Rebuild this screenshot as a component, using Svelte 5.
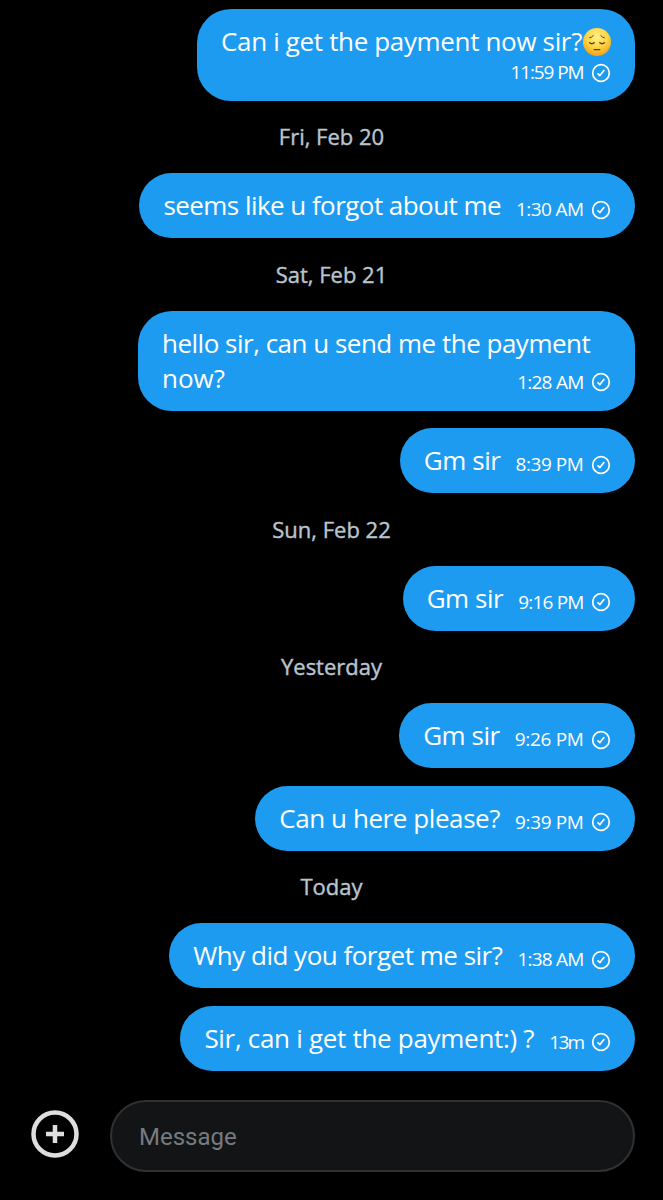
<script lang="ts">
  type Message = {
    text: string;
    // last line, shares its row with the time
    lastLine?: string;
    time: string;
    emoji?: boolean;
    layout?: 'below' | 'wrap';
    // letter spacing, px
    tracking: number;
    timeTracking: number;
  };

  type Day = {
    label?: string;
    messages: Message[];
  };

  const days: Day[] = [
    {
      messages: [
        {
          text: 'Can i get the payment now sir?',
          time: '11:59 PM',
          emoji: true,
          layout: 'below',
          tracking: -0.35,
          timeTracking: -1.1,
        },
      ],
    },
    {
      label: 'Fri, Feb 20',
      messages: [
        {
          text: 'seems like u forgot about me',
          time: '1:30 AM',
          tracking: -0.55,
          timeTracking: -0.6,
        },
      ],
    },
    {
      label: 'Sat, Feb 21',
      messages: [
        {
          text: 'hello sir, can u send me the payment',
          lastLine: 'now?',
          time: '1:28 AM',
          layout: 'wrap',
          tracking: -0.5,
          timeTracking: -0.75,
        },
        {
          text: 'Gm sir',
          time: '8:39 PM',
          tracking: -0.45,
          timeTracking: -0.43,
        },
      ],
    },
    {
      label: 'Sun, Feb 22',
      messages: [
        {
          text: 'Gm sir',
          time: '9:16 PM',
          tracking: -0.45,
          timeTracking: -0.83,
        },
      ],
    },
    {
      label: 'Yesterday',
      messages: [
        {
          text: 'Gm sir',
          time: '9:26 PM',
          tracking: -0.45,
          timeTracking: -0.33,
        },
        {
          text: 'Can u here please?',
          time: '9:39 PM',
          tracking: -0.42,
          timeTracking: -0.38,
        },
      ],
    },
    {
      label: 'Today',
      messages: [
        {
          text: 'Why did you forget me sir?',
          time: '1:38 AM',
          tracking: -0.5,
          timeTracking: -0.8,
        },
        {
          text: 'Sir, can i get the payment:) ?',
          time: '13m',
          tracking: -0.3,
          timeTracking: -1.7,
        },
      ],
    },
  ];
</script>

<div class="chat">
  <div class="messages">
    {#each days as day}
      {#if day.label}
        <div class="day-label">{day.label}</div>
      {/if}
      {#each day.messages as message}
        <div class="bubble {message.layout ?? ''}">
          <div class="text" style:letter-spacing="{message.tracking}px">
            {message.text}{#if message.emoji}<svg
                class="emoji"
                viewBox="0 0 28 28"
                aria-label="pensive face"
              >
                <defs>
                  <radialGradient id="face" cx="50%" cy="32%" r="68%">
                    <stop offset="0" stop-color="#fff08a" />
                    <stop offset="0.55" stop-color="#fdd544" />
                    <stop offset="1" stop-color="#f5a012" />
                  </radialGradient>
                </defs>
                <circle cx="14" cy="14" r="14" fill="url(#face)" />
                <g fill="none" stroke="#5a3a10" stroke-linecap="round">
                  <path d="M6.6 9.8Q9 9.4 10.3 7.6" stroke-width="1" />
                  <path d="M21.4 9.8Q19 9.4 17.7 7.6" stroke-width="1" />
                  <path d="M6.6 14.8Q8.9 16.7 11.2 14.8" stroke-width="1.4" />
                  <path d="M16.8 14.8Q19.1 16.7 21.4 14.8" stroke-width="1.4" />
                  <path d="M11.2 21.6H16.8" stroke-width="1.3" />
                </g>
              </svg>{/if}
          </div>
          {#if message.lastLine}
            <div class="text">{message.lastLine}</div>
          {/if}
          <div class="meta">
            <span style:letter-spacing="{message.timeTracking}px"
              >{message.time}</span
            >
            <svg class="sent" viewBox="0 0 20 20" aria-hidden="true">
              <circle cx="10" cy="10" r="8.3" />
              <path d="M6.5 10.3L8.9 12.6L13.3 7" />
            </svg>
          </div>
        </div>
      {/each}
    {/each}
  </div>

  <div class="composer">
    <button class="add" aria-label="Add attachment">
      <svg viewBox="0 0 48 48">
        <circle cx="24" cy="24" r="21.5" />
        <path d="M24 15V33M15 24H33" />
      </svg>
    </button>
    <input type="text" placeholder="Message" />
  </div>
</div>

<style>
  :global(body) {
    background: #000;
  }

  .chat {
    box-sizing: border-box;
    height: 1200px;
    display: flex;
    flex-direction: column;
    overflow: hidden;
    background: #000;
    font-family: 'Open Sans', 'Noto Sans', sans-serif;
  }

  .messages {
    flex: 1;
    display: flex;
    flex-direction: column;
    align-items: flex-end;
    gap: 17.5px;
    padding: 9.1px 28px 0;
  }

  .day-label {
    align-self: center;
    height: 37.5px;
    line-height: 36px;
    font-size: 22px;
    color: #b9c4cd;
    -webkit-text-stroke: 0.4px #b9c4cd;
  }

  .bubble {
    box-sizing: border-box;
    display: flex;
    align-items: flex-end;
    padding: 15px 24px;
    border-radius: 34px;
    background: #1d9bf0;
    color: #fff;
  }

  .bubble.below {
    flex-direction: column;
    height: 91.5px;
  }

  .text {
    font-size: 26px;
    line-height: 35px;
    white-space: nowrap;
  }

  .meta {
    display: flex;
    align-items: center;
    gap: 7.5px;
    height: 27px;
    margin-left: 15px;
    font-size: 19px;
    line-height: 27px;
    white-space: nowrap;
  }

  .bubble.wrap {
    flex-wrap: wrap;
    justify-content: space-between;
    width: 497px;
  }

  .wrap .text:first-child {
    width: 100%;
  }

  .emoji {
    width: 28px;
    height: 28px;
    margin-left: 1px;
    vertical-align: -5px;
  }

  .sent {
    flex-shrink: 0;
    width: 20px;
    height: 20px;
    fill: none;
    stroke: #fff;
    stroke-width: 1.7;
  }

  .composer {
    display: flex;
    align-items: center;
    gap: 31px;
    padding: 0 28px 28px 31px;
  }

  .add {
    width: 48px;
    height: 48px;
    margin-top: -4px;
    padding: 0;
    border: none;
    background: none;
  }

  .add svg {
    display: block;
    fill: none;
    stroke: #dedede;
    stroke-width: 4.5;
  }

  input {
    box-sizing: border-box;
    flex: 1;
    min-width: 0;
    height: 72px;
    padding: 2px 27px 0;
    border: 2px solid #2f3133;
    border-radius: 36px;
    outline: none;
    background: #131416;
    color: #fff;
    font-family: Roboto, sans-serif;
    font-size: 24px;
  }

  input::placeholder {
    color: #777b7f;
    opacity: 1;
  }
</style>
